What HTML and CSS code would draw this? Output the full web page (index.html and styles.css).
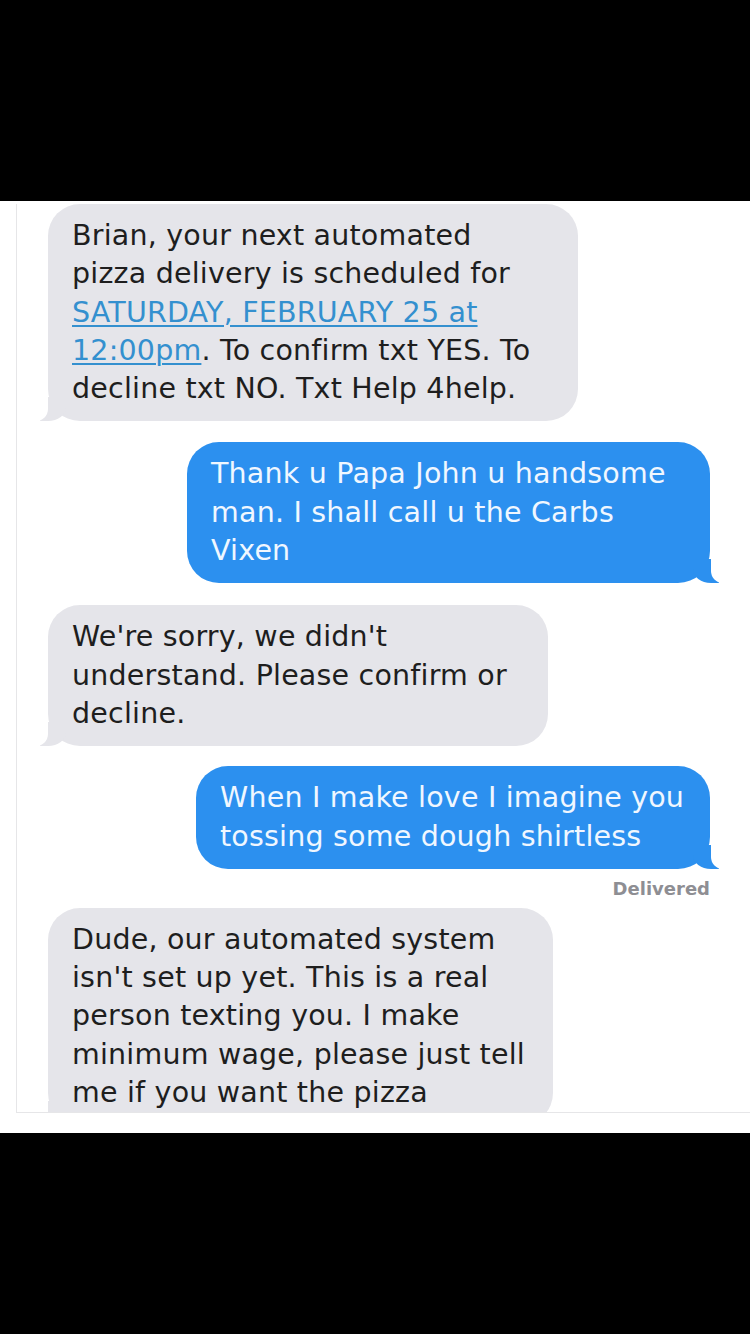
FILE: index.html
```
<!DOCTYPE html>
<html lang="en">
<head>
<meta charset="utf-8">
<title>Messages</title>
<link rel="stylesheet" href="styles.css">
</head>
<body>
<div class="top-bar"></div>
<div class="photo">
  <div class="screen">
    <div class="bubble in b1">Brian, your next automated<br>pizza delivery is scheduled for<br><span class="link">SATURDAY, FEBRUARY 25 at</span><br><span class="link">12:00pm</span>. To confirm txt YES. To<br>decline txt NO. Txt Help 4help.</div>
    <div class="bubble out b2">Thank u Papa John u handsome<br>man. I shall call u the Carbs<br>Vixen</div>
    <div class="bubble in b3">We're sorry, we didn't<br>understand. Please confirm or<br>decline.</div>
    <div class="bubble out b4">When I make love I imagine you<br>tossing some dough shirtless</div>
    <div class="status">Delivered</div>
    <div class="bubble in b5">Dude, our automated system<br>isn't set up yet. This is a real<br>person texting you. I make<br>minimum wage, please just tell<br>me if you want the pizza</div>
  </div>
</div>
<div class="bottom-bar"></div>
</body>
</html>
```
FILE: styles.css
```
html, body {
  margin: 0;
  padding: 0;
  background: #000;
}

body {
  width: 750px;
  height: 1334px;
  overflow: hidden;
  font-family: "DejaVu Sans", "Liberation Sans", Arial, sans-serif;
}

.top-bar {
  height: 201px;
}

.photo {
  background: #fff;
  height: 932px;
  box-sizing: border-box;
  padding: 3px 0 0 16px;
}

.screen {
  height: 909px;
  box-sizing: border-box;
  border-left: 1px solid #e6e6e8;
  border-bottom: 1px solid #e6e6e8;
  background: #fff;
  overflow: hidden;
  display: flex;
  flex-direction: column;
  padding: 0 40px 0 31px;
}

.bubble {
  position: relative;
  box-sizing: border-box;
  padding: 13px 20px 13px 24px;
  border-radius: 32px;
  font-size: 28.5px;
  line-height: 38.3px;
  letter-spacing: 0.2px;
  white-space: nowrap;
  flex: none;
}

.in {
  align-self: flex-start;
  background: #e5e5ea;
  color: #1e1e1e;
}

.out {
  align-self: flex-end;
  background: #2c90ef;
  color: #f0f7ff;
}

.in::before {
  content: "";
  position: absolute;
  left: -8px;
  bottom: 0;
  width: 26px;
  height: 24px;
  background: #e5e5ea;
  border-bottom-right-radius: 18px 14px;
}

.in::after {
  content: "";
  position: absolute;
  left: -22px;
  bottom: 0;
  width: 22px;
  height: 26px;
  background: #fff;
  border-bottom-right-radius: 12px;
}

.out::before {
  content: "";
  position: absolute;
  right: -9px;
  bottom: 0;
  width: 26px;
  height: 24px;
  background: #2c90ef;
  border-bottom-left-radius: 18px 14px;
}

.out::after {
  content: "";
  position: absolute;
  right: -23px;
  bottom: 0;
  width: 22px;
  height: 26px;
  background: #fff;
  border-bottom-left-radius: 12px;
}

.link {
  color: #3490cf;
  text-decoration: underline;
  text-underline-offset: 3px;
  text-decoration-thickness: 1.5px;
}

.b1 {
  width: 530px;
  margin-top: 0;
}

.b2 {
  width: 523px;
  margin-top: 21px;
}

.b3 {
  width: 500px;
  margin-top: 22px;
}

.b4 {
  width: 514px;
  margin-top: 20px;
}

.status {
  align-self: flex-end;
  margin-top: 10px;
  height: 20px;
  line-height: 20px;
  font-size: 18px;
  font-weight: bold;
  color: #8e8e93;
}

.b5 {
  width: 505px;
  margin-top: 9px;
}
```
